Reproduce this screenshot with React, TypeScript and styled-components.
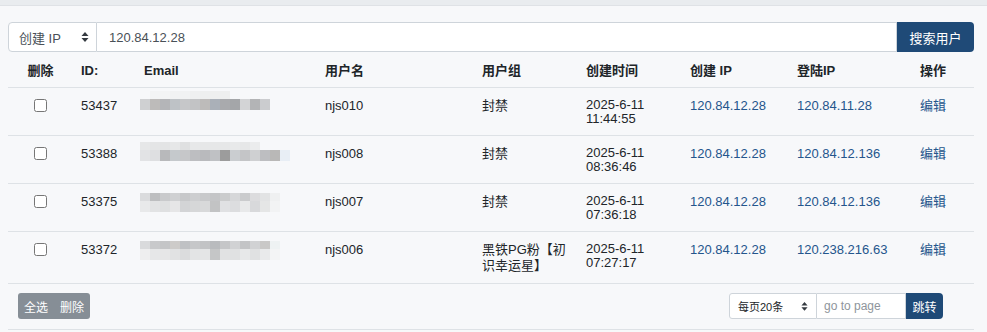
import React from "react";
import styled, { createGlobalStyle } from "styled-components";

const GlobalStyle = createGlobalStyle`
  html, body { margin: 0; padding: 0; background: #f7f8fa; }
  body {
    font-family: "Liberation Sans", Arial, "Noto Sans CJK SC", sans-serif;
    font-size: 13px;
    color: #212529;
  }
  * { box-sizing: border-box; }
`;

const TopStrip = styled.div`
  height: 6px;
  background: #e9ecef;
  border-bottom: 1px solid #dfe2e6;
`;

const Page = styled.div`
  width: 974px;
  padding: 16px 0 0 8px;
`;

const SearchBar = styled.div`
  display: flex;
  height: 30px;
`;

const SelectBox = styled.div`
  width: 89px;
  display: flex;
  align-items: center;
  justify-content: space-between;
  padding: 0 7px 0 10px;
  background: #fff;
  border: 1px solid #ced4da;
  border-radius: 4px 0 0 4px;
  color: #495057;
  font-size: 13px;
`;

const SearchInput = styled.div`
  flex: 1;
  display: flex;
  align-items: center;
  padding-left: 12px;
  background: #fff;
  border: 1px solid #ced4da;
  border-left: none;
  color: #495057;
  font-size: 13px;
`;

const PrimaryButton = styled.button<{ $w: number; $small?: boolean }>`
  width: ${(p) => p.$w}px;
  border: none;
  background: #1f4a77;
  color: #fff;
  font-family: inherit;
  font-size: ${(p) => (p.$small ? 12 : 13)}px;
  border-radius: 0 4px 4px 0;
  padding: 0;
  cursor: pointer;
`;

const Table = styled.table`
  margin-top: 3px;
  width: 966px;
  border-collapse: collapse;
  table-layout: fixed;
`;

const Th = styled.th<{ $center?: boolean }>`
  text-align: ${(p) => (p.$center ? "center" : "left")};
  font-weight: bold;
  padding: 8px 8px;
  line-height: 16px;
  font-size: 13px;
  border-bottom: 1px solid #dee2e6;
`;

const Td = styled.td<{ $center?: boolean; $tight?: boolean }>`
  text-align: ${(p) => (p.$center ? "center" : "left")};
  vertical-align: top;
  padding: 10px 8px 9px;
  line-height: ${(p) => (p.$tight ? 14 : 16)}px;
  border-bottom: 1px solid #dee2e6;
  font-size: 13px;
`;

const LinkText = styled.span`
  color: #24558c;
`;

const Check = styled.input`
  margin: 1px 0 0 0;
  width: 13px;
  height: 13px;
`;

const Mosaic = styled.div<{ $n: number; $offset: number }>`
  display: grid;
  grid-template-columns: repeat(${(p) => p.$n}, 10px);
  grid-template-rows: 8px 11px;
  margin: ${(p) => p.$offset}px 0 0 -4px;
`;

const Tile = styled.div<{ $c: string }>`
  background: ${(p) => p.$c};
`;

const Footer = styled.div`
  width: 966px;
  display: flex;
  align-items: center;
  justify-content: space-between;
  padding: 9px 31px 10px 10px;
  border-bottom: 1px solid #dee2e6;
`;

const BtnGroup = styled.div`
  display: flex;
  height: 26px;
  background: #868e96;
  border-radius: 3px;
`;

const GrayBtn = styled.button`
  width: 36px;
  border: none;
  background: transparent;
  color: #fff;
  font-family: inherit;
  font-size: 12px;
  padding: 0;
`;

const Pager = styled.div`
  display: flex;
  height: 26px;
`;

const PageSelect = styled.div`
  width: 88px;
  display: flex;
  align-items: center;
  justify-content: space-between;
  padding: 0 8px 0 8px;
  background: #fff;
  border: 1px solid #ced4da;
  border-radius: 3px 0 0 3px;
  font-size: 11px;
  color: #212529;
`;

const PageInput = styled.div`
  width: 89px;
  display: flex;
  align-items: center;
  padding-left: 7px;
  background: #fff;
  border: 1px solid #ced4da;
  border-left: none;
  color: #8e959c;
  font-size: 12px;
`;

const Arrows = ({ size = 8 }: { size?: number }) => (
  <svg width={size} height={size * 1.5} viewBox="0 0 8 12">
    <path d="M4 1 L7.5 5 H0.5 Z M4 11 L0.5 7 H7.5 Z" fill="#343a40" />
  </svg>
);

type Row = {
  id: string;
  name: string;
  group: React.ReactNode;
  date: string;
  time: string;
  cip: string;
  lip: string;
  top: string[];
  bottom: string[];
  offset: number;
};

const rows: Row[] = [
  {
    id: "53437",
    name: "njs010",
    group: "封禁",
    date: "2025-6-11",
    time: "11:44:55",
    cip: "120.84.12.28",
    lip: "120.84.11.28",
    offset: -7,
    top: ["#f7f8fa", "#f3f4f5", "#f3f4f5", "#f1f2f3", "#f1f2f3", "#eff0f1", "#eeefef", "#eeefef", "#eeefef", "#f7f8fa", "#f7f8fa", "#f7f8fa", "#f7f8fa"],
    bottom: ["#cfd0d2", "#bdbbba", "#b4b5b8", "#bec2c6", "#c6c7c9", "#c2c3c5", "#bdbbba", "#aab0b8", "#a9aaad", "#a4a6a9", "#d3d4d6", "#b3b4b6", "#cbcccf"],
  },
  {
    id: "53388",
    name: "njs008",
    group: "封禁",
    date: "2025-6-11",
    time: "08:36:46",
    cip: "120.84.12.28",
    lip: "120.84.12.136",
    offset: -4,
    top: ["#e6e7e8", "#e4e5e6", "#e3e4e5", "#e6e7e8", "#dfe0e1", "#e7e8e9", "#e6e7e8", "#e6e7e8", "#e6e7e8", "#e8e9ea", "#e6e7e8", "#ebeced", "#f7f8fa", "#f7f8fa", "#f7f8fa"],
    bottom: ["#e2e3e5", "#dedfe1", "#b8b9bb", "#c5c9cc", "#c6c7c9", "#bdbec1", "#b9babd", "#bfc1c4", "#9c9c9c", "#cacdd0", "#c4c5c7", "#cfd0d2", "#bdbec1", "#b9b8b7", "#e8eef5"],
  },
  {
    id: "53375",
    name: "njs007",
    group: "封禁",
    date: "2025-6-11",
    time: "07:36:18",
    cip: "120.84.12.28",
    lip: "120.84.12.136",
    offset: -1,
    top: ["#dadbdd", "#bdbec0", "#c9cacc", "#cfd0d2", "#c7c8ca", "#cdced0", "#c8c9cb", "#c4c5c7", "#cbcccd", "#d6d7d9", "#cacbcd", "#dcdcde", "#e2e3e4", "#eff0f1"],
    bottom: ["#e8e9ea", "#e2e3e4", "#dfe0e1", "#e6e6e7", "#d3d4d6", "#d6d7d8", "#d8d9da", "#c2c3c4", "#e0e1e3", "#dcdddf", "#e8e9ea", "#d8d9db", "#e5e6e6", "#f2f3f4"],
  },
  {
    id: "53372",
    name: "njs006",
    group: (
      <>
        黑铁PG粉【初
        <br />
        识幸运星】
      </>
    ),
    date: "2025-6-11",
    time: "07:27:17",
    cip: "120.84.12.28",
    lip: "120.238.216.63",
    offset: -1,
    top: ["#d9dadc", "#c8c9cb", "#c4c5c7", "#cdcbc9", "#bfc1c4", "#c6c7c9", "#c2c3c5", "#b9bbbe", "#c5c6c8", "#d1d2d4", "#c3c4c6", "#d1d2d4", "#c9c8c7", "#eef2f3"],
    bottom: ["#eeeeef", "#e6e7e8", "#e6e6e7", "#e1e2e3", "#dbdcdd", "#e3e4e5", "#e4e5e6", "#c5c6c7", "#e1e2e3", "#e0e1e2", "#e7e8e9", "#e0e1e2", "#e9eaeb", "#f3f4f5"],
  },
];

const widths = [65, 63, 181, 157, 104, 104, 107, 123, 62];

export default function App() {
  return (
    <>
      <GlobalStyle />
      <TopStrip />
      <Page>
        <SearchBar>
          <SelectBox>
            <span>创建 IP</span>
            <Arrows />
          </SelectBox>
          <SearchInput>120.84.12.28</SearchInput>
          <PrimaryButton $w={77}>搜索用户</PrimaryButton>
        </SearchBar>
        <Table>
          <colgroup>
            {widths.map((w, i) => (
              <col key={i} style={{ width: w }} />
            ))}
          </colgroup>
          <thead>
            <tr>
              <Th $center>删除</Th>
              <Th>ID:</Th>
              <Th>Email</Th>
              <Th>用户名</Th>
              <Th>用户组</Th>
              <Th>创建时间</Th>
              <Th>创建 IP</Th>
              <Th>登陆IP</Th>
              <Th>操作</Th>
            </tr>
          </thead>
          <tbody>
            {rows.map((r) => (
              <tr key={r.id}>
                <Td $center>
                  <Check type="checkbox" />
                </Td>
                <Td>{r.id}</Td>
                <Td>
                  <Mosaic $n={r.bottom.length} $offset={r.offset}>
                    {r.top.map((c, i) => (
                      <Tile key={"t" + i} $c={c} />
                    ))}
                    {r.bottom.map((c, i) => (
                      <Tile key={"b" + i} $c={c} />
                    ))}
                  </Mosaic>
                </Td>
                <Td>{r.name}</Td>
                <Td>{r.group}</Td>
                <Td $tight>
                  {r.date}
                  <br />
                  {r.time}
                </Td>
                <Td>
                  <LinkText>{r.cip}</LinkText>
                </Td>
                <Td>
                  <LinkText>{r.lip}</LinkText>
                </Td>
                <Td>
                  <LinkText>编辑</LinkText>
                </Td>
              </tr>
            ))}
          </tbody>
        </Table>
        <Footer>
          <BtnGroup>
            <GrayBtn>全选</GrayBtn>
            <GrayBtn>删除</GrayBtn>
          </BtnGroup>
          <Pager>
            <PageSelect>
              <span>每页20条</span>
              <Arrows size={7} />
            </PageSelect>
            <PageInput>go to page</PageInput>
            <PrimaryButton $w={37} $small>
              跳转
            </PrimaryButton>
          </Pager>
        </Footer>
      </Page>
    </>
  );
}
